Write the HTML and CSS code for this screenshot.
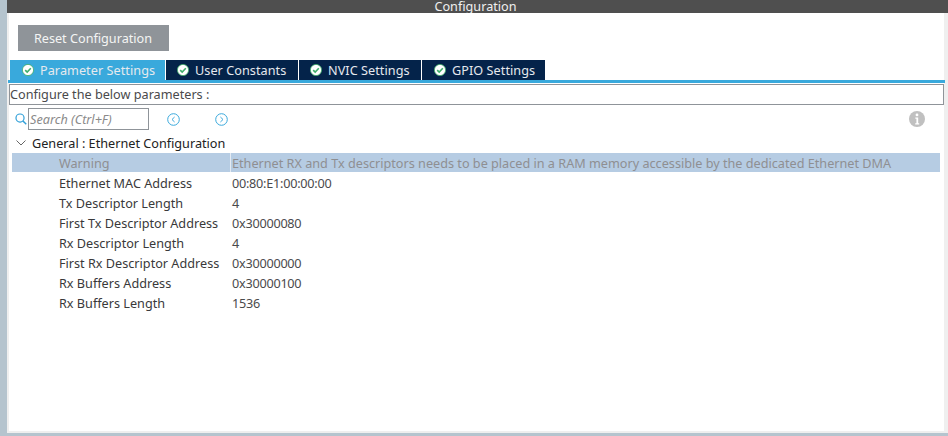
FILE: index.html
```html
<!DOCTYPE html>
<html lang="en">
<head>
<meta charset="utf-8">
<title>Configuration</title>
<link rel="stylesheet" href="styles.css">
</head>
<body>
<div class="frame">
  <div class="titlebar">Configuration</div>
  <div class="panel">
    <div class="toolbar"><button class="reset">Reset Configuration</button></div>
    <div class="tabs">
      <div class="tab active"><svg class="check" viewBox="0 0 12 12"><circle cx="6" cy="6" r="5.6" fill="#fff" stroke="#3fae6a" stroke-width=".8"/><path d="M3.2 6.1l2 2 3.6-3.8" fill="none" stroke="#3fae6a" stroke-width="1.6"/></svg><span>Parameter Settings</span></div>
      <div class="tab t2"><svg class="check" viewBox="0 0 12 12"><circle cx="6" cy="6" r="5.6" fill="#fff" stroke="#3fae6a" stroke-width=".8"/><path d="M3.2 6.1l2 2 3.6-3.8" fill="none" stroke="#3fae6a" stroke-width="1.6"/></svg><span>User Constants</span></div>
      <div class="tab t3"><svg class="check" viewBox="0 0 12 12"><circle cx="6" cy="6" r="5.6" fill="#fff" stroke="#3fae6a" stroke-width=".8"/><path d="M3.2 6.1l2 2 3.6-3.8" fill="none" stroke="#3fae6a" stroke-width="1.6"/></svg><span>NVIC Settings</span></div>
      <div class="tab t4"><svg class="check" viewBox="0 0 12 12"><circle cx="6" cy="6" r="5.6" fill="#fff" stroke="#3fae6a" stroke-width=".8"/><path d="M3.2 6.1l2 2 3.6-3.8" fill="none" stroke="#3fae6a" stroke-width="1.6"/></svg><span>GPIO Settings</span></div>
    </div>
    <div class="tabline"></div>
    <div class="hint">Configure the below parameters :</div>
    <div class="searchrow">
      <svg class="mag" viewBox="0 0 11 11"><circle cx="4.6" cy="4.6" r="3.7" fill="none" stroke="#2f9fd8" stroke-width="1.1"/><path d="M7.3 7.3l3 3" stroke="#2f9fd8" stroke-width="1.3"/></svg>
      <div class="search">Search (Ctrl+F)</div>
      <svg class="nav prev" viewBox="0 0 13 13"><circle cx="6.5" cy="6.5" r="5.8" fill="none" stroke="#3aa9dc" stroke-width="1"/><path d="M7.6 4L5 6.500 7.600 9" fill="none" stroke="#3aa9dc" stroke-width="1"/></svg>
      <svg class="nav next" viewBox="0 0 13 13"><circle cx="6.5" cy="6.5" r="5.8" fill="none" stroke="#3aa9dc" stroke-width="1"/><path d="M5.4 4L8 6.500 5.400 9" fill="none" stroke="#3aa9dc" stroke-width="1"/></svg>
      <svg class="info" viewBox="0 0 16 16"><circle cx="8" cy="8" r="8" fill="#c0c0c0"/><circle cx="8" cy="3.900" r="1.4" fill="#fff"/><path d="M6.300 6.600h2.900v5.600h1v1.200H6.200v-1.200h1.200V7.800H6.300z" fill="#fff"/></svg>
    </div>
    <div class="group">
      <svg class="chev" viewBox="0 0 10 6"><path d="M.5.500L5 5 9.500.5" fill="none" stroke="#666" stroke-width="1"/></svg>
      <span>General : Ethernet Configuration</span>
    </div>
    <div class="rows">
      <div class="row warn"><div class="key">Warning</div><div class="val">Ethernet RX and Tx descriptors needs to be placed in a RAM memory accessible by the dedicated Ethernet DMA</div></div>
      <div class="row"><div class="key">Ethernet MAC Address</div><div class="val num">00:80:E1:00:00:00</div></div>
      <div class="row"><div class="key">Tx Descriptor Length</div><div class="val num">4</div></div>
      <div class="row"><div class="key">First Tx Descriptor Address</div><div class="val num">0x30000080</div></div>
      <div class="row"><div class="key">Rx Descriptor Length</div><div class="val num">4</div></div>
      <div class="row"><div class="key">First Rx Descriptor Address</div><div class="val num">0x30000000</div></div>
      <div class="row"><div class="key">Rx Buffers Address</div><div class="val num">0x30000100</div></div>
      <div class="row"><div class="key">Rx Buffers Length</div><div class="val num">1536</div></div>
    </div>
  </div>
</div>
</body>
</html>
```

FILE: styles.css
```css
* { box-sizing: border-box; }
html, body { margin: 0; height: 100%; overflow: hidden; }
body {
  font-family: "Noto Sans", sans-serif;
  font-size: 12.67px;
  color: #39393a;
  background: #b5c4ce;
}
.frame {
  height: 433px;
  margin-left: 7px;
  display: flex;
  flex-direction: column;
  background: #efefef;
}
.titlebar {
  height: 13px;
  flex: none;
  background: #4f4f4f;
  color: #f0f0f0;
  text-align: center;
  line-height: 12px;
  overflow: hidden;
  padding-right: 4px;
}
.panel {
  flex: 1;
  margin: 0 4px 2px 2px;
  background: #fff;
  display: flex;
  flex-direction: column;
}
.toolbar { height: 47px; flex: none; padding: 12px 0 0 9px; }
.reset {
  display: block;
  width: 151px;
  height: 26px;
  border: 0;
  padding: 0 1px 0 0;
  background: #8f9499;
  color: #f4f4f4;
  font: 12.67px "Noto Sans", sans-serif;
}
.tabs { display: flex; height: 20px; flex: none; padding-left: 1px; gap: 1px; }
.tab {
  display: flex;
  align-items: center;
  background: #04234a;
  color: #e6e9ee;
  width: 132px;
  padding-left: 11px;
  letter-spacing: .05px;
}
.tab.active { width: 155px; padding-left: 12px; background: #39a9dc; }
.t3 { width: 122px; }
.t4 { width: 123px; padding-left: 12px; }
.check { width: 12px; height: 12px; flex: none; margin-right: 6px; }
.tabline {
  height: 3px;
  flex: none;
  width: 937px;
  margin-left: -1px;
  background: #39a9dc;
}
.hint {
  flex: none;
  height: 21px;
  margin: 1px 0 0 0;
  border: 1px solid #8f9499;
  line-height: 19px;
  color: #4a4a4c;
  white-space: nowrap;
}
.searchrow {
  flex: none;
  height: 24px;
  display: flex;
  align-items: center;
  padding-left: 6px;
  margin-top: 2px;
}
.mag { width: 12px; height: 12px; flex: none; }
.search {
  width: 121px;
  height: 22px;
  margin-left: 1px;
  border: 1px solid #8f9499;
  font-style: italic;
  color: #8a8a8a;
  line-height: 20px;
  padding-left: 1px;
}
.nav { width: 13px; height: 13px; flex: none; margin-top: 1px; }
.prev { margin-left: 18px; }
.next { margin-left: 35px; }
.info { width: 16px; height: 16px; flex: none; margin-left: 681px; }
.group {
  flex: none;
  height: 20px;
  margin-top: 2px;
  display: flex;
  align-items: center;
  padding-left: 7px;
  color: #222;
}
.chev { width: 10px; height: 6px; flex: none; margin-right: 6px; }
.rows { flex: none; margin: 0 4px 0 3px; width: 928px; }
.row { display: flex; height: 20px; line-height: 20px; white-space: nowrap; }
.key { width: 219px; padding-left: 47px; flex: none; color: #39393a; }
.val { flex: 1; padding-left: 1px; color: #4a4a4c; }
.num { letter-spacing: -.25px; }
.warn { height: 19px; margin-bottom: 1px; background: #b6cce3; }
.warn .key { color: #8f8f92; border-right: 1px solid #e4ebf3; }
.warn .val { color: #8f8f92; }
```
